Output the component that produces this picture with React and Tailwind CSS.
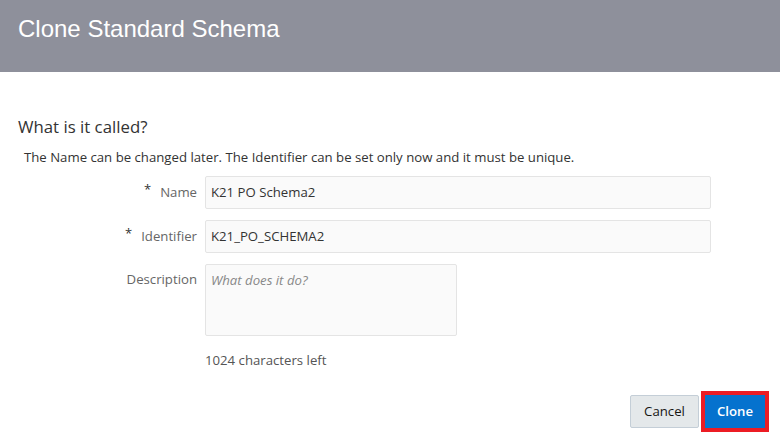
export default function App() {
  const body = { fontFamily: '"Open Sans", "Noto Sans", sans-serif' };
  return (
    <div className="w-[780px] h-[443px] bg-white overflow-hidden flex flex-col" style={body}>
      <div className="h-[72px] shrink-0 bg-[#8e909b] flex items-start pl-[18px] pt-[13px]">
        <h1 className="text-white text-[24px] leading-[32px] font-['Liberation_Sans',Arial,sans-serif]">Clone Standard Schema</h1>
      </div>

      <div className="flex flex-col flex-1">
        <h2 className="mt-[43px] ml-[18px] text-[16.8px] leading-[24px] text-[#333]">What is it called?</h2>
        <p className="mt-[9px] ml-[24px] text-[13.2px] leading-[18px] text-[#333]">
          The Name can be changed later. The Identifier can be set only now and it must be unique.
        </p>

        <div className="mt-[10px] flex flex-col gap-[11px]">
          <div className="flex items-center">
            <label className="w-[205px] text-right pr-[8px] text-[13.2px] text-[#666]">
              <span className="relative -top-[3px] text-[#333] text-[13px] mr-[9px]">*</span>Name
            </label>
            <div className="w-[506px] h-[33px] border border-[#e4e4e4] bg-[#fafafa] rounded-[2px] flex items-center px-[5px] text-[13.2px] text-[#333]">
              K21 PO Schema2
            </div>
          </div>
          <div className="flex items-center">
            <label className="w-[205px] text-right pr-[8px] text-[13.2px] text-[#666]">
              <span className="relative -top-[3px] text-[#333] text-[13px] mr-[9px]">*</span>Identifier
            </label>
            <div className="w-[506px] h-[33px] border border-[#e4e4e4] bg-[#fafafa] rounded-[2px] flex items-center px-[5px] text-[13.2px] text-[#333]">
              K21_PO_SCHEMA2
            </div>
          </div>
          <div className="flex items-start">
            <label className="w-[205px] text-right pr-[8px] pt-[6px] text-[13.2px] text-[#666]">Description</label>
            <div className="w-[252px] h-[72px] border border-[#e4e4e4] bg-[#fafafa] rounded-[2px] px-[5px] pt-[6px] text-[13.2px] italic text-[#888]">
              What does it do?
            </div>
          </div>
          <div className="ml-[205px] mt-[4px] text-[13.2px] text-[#555]">1024 characters left</div>
        </div>

        <div className="mt-auto mb-[11px] mr-[11px] flex justify-end items-center gap-[2px]">
          <button className="h-[33px] w-[69px] bg-[#e4e8ea] border border-[#c4ced7] rounded-[2px] text-[13.2px] text-[#161513]">Cancel</button>
          <div className="border-[4px] border-[#ec1c24] p-0">
            <button className="h-[33px] w-[60px] bg-[#0572ce] text-white text-[13.2px] font-semibold">Clone</button>
          </div>
        </div>
      </div>
    </div>
  );
}
